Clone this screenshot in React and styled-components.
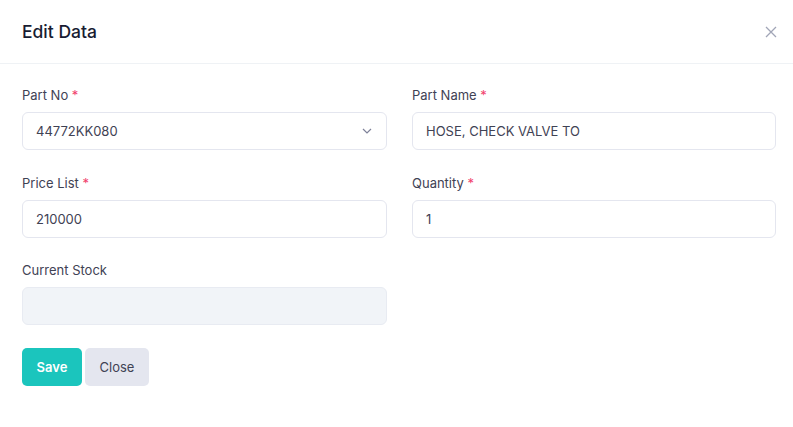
import React from "react";
import styled, { createGlobalStyle } from "styled-components";

const GlobalStyle = createGlobalStyle`
  body {
    margin: 0;
    background: #fff;
    font-family: "Inter", "Noto Sans", sans-serif;
  }
`;

export default function App() {
  return (
    <Modal>
      <GlobalStyle />
      <Header>
        <Title>Edit Data</Title>
        <CloseIcon aria-label="close">
          <svg width="12" height="12" viewBox="0 0 12 12">
            <path d="M1 1L11 11M11 1L1 11" stroke="#a1a5b7" strokeWidth="1.3" />
          </svg>
        </CloseIcon>
      </Header>
      <Body>
        <Grid>
          <Field>
            <Label>
              Part No <Req>*</Req>
            </Label>
            <SelectBox>
              <span>44772KK080</span>
              <svg width="10" height="6" viewBox="0 0 10 6">
                <path d="M1 1l4 4 4-4" fill="none" stroke="#7e8299" strokeWidth="1.2" />
              </svg>
            </SelectBox>
          </Field>
          <Field>
            <Label>
              Part Name <Req>*</Req>
            </Label>
            <Input defaultValue="HOSE, CHECK VALVE TO" />
          </Field>
          <Field>
            <Label>
              Price List <Req>*</Req>
            </Label>
            <Input defaultValue="210000" />
          </Field>
          <Field>
            <Label>
              Quantity <Req>*</Req>
            </Label>
            <Input defaultValue="1" />
          </Field>
          <Field $tight>
            <Label>Current Stock</Label>
            <Input disabled defaultValue="" />
          </Field>
        </Grid>
        <Actions>
          <Button $primary>Save</Button>
          <Button>Close</Button>
        </Actions>
      </Body>
    </Modal>
  );
}

const Modal = styled.div`
  width: 793px;
  height: 427px;
  background: #fff;
`;

const Header = styled.div`
  height: 64px;
  border-bottom: 1px solid #eff2f5;
  display: flex;
  align-items: center;
  justify-content: space-between;
  padding: 0 16px 0 22px;
  box-sizing: border-box;
`;

const Title = styled.h3`
  margin: 0;
  font-size: 17.5px;
  font-weight: 500;
  color: #181c32;
`;

const CloseIcon = styled.button`
  border: none;
  background: none;
  padding: 0;
  width: 12px;
  height: 12px;
  display: flex;
`;

const Body = styled.div`
  padding: 21px 17px 0 22px;
`;

const Grid = styled.div`
  display: grid;
  grid-template-columns: 365px 364px;
  column-gap: 25px;
  row-gap: 23px;
`;

const Field = styled.div`
  display: flex;
  flex-direction: column;
  margin-top: ${(p) => (p.$tight ? "-1px" : "0")};
`;

const Label = styled.label`
  font-size: 13px;
  color: #3f4254;
  line-height: 20px;
  margin-bottom: 7px;
`;

const Req = styled.span`
  color: #f1416c;
`;

const Input = styled.input`
  box-sizing: border-box;
  height: 38px;
  border: 1px solid #e4e6ef;
  border-radius: 6px;
  padding: 0 13px;
  font-family: inherit;
  font-size: 13px;
  color: #3f4254;
  background: #fff;
  outline: none;

  &:disabled {
    background: #f1f4f8;
    border-color: #e8ebf2;
  }
`;

const SelectBox = styled.div`
  box-sizing: border-box;
  height: 38px;
  border: 1px solid #e4e6ef;
  border-radius: 6px;
  padding: 0 14px 0 13px;
  display: flex;
  align-items: center;
  justify-content: space-between;
  font-size: 13px;
  color: #3f4254;
`;

const Actions = styled.div`
  display: flex;
  gap: 3px;
  margin-top: 23px;
`;

const Button = styled.button`
  height: 38px;
  width: ${(p) => (p.$primary ? 60 : 64)}px;
  border: none;
  border-radius: 5px;
  padding: 0;
  font-family: inherit;
  font-size: 13px;
  font-weight: ${(p) => (p.$primary ? 600 : 400)};
  color: ${(p) => (p.$primary ? "#fff" : "#3f4254")};
  background: ${(p) => (p.$primary ? "#1bc5bd" : "#e4e6ef")};
`;
